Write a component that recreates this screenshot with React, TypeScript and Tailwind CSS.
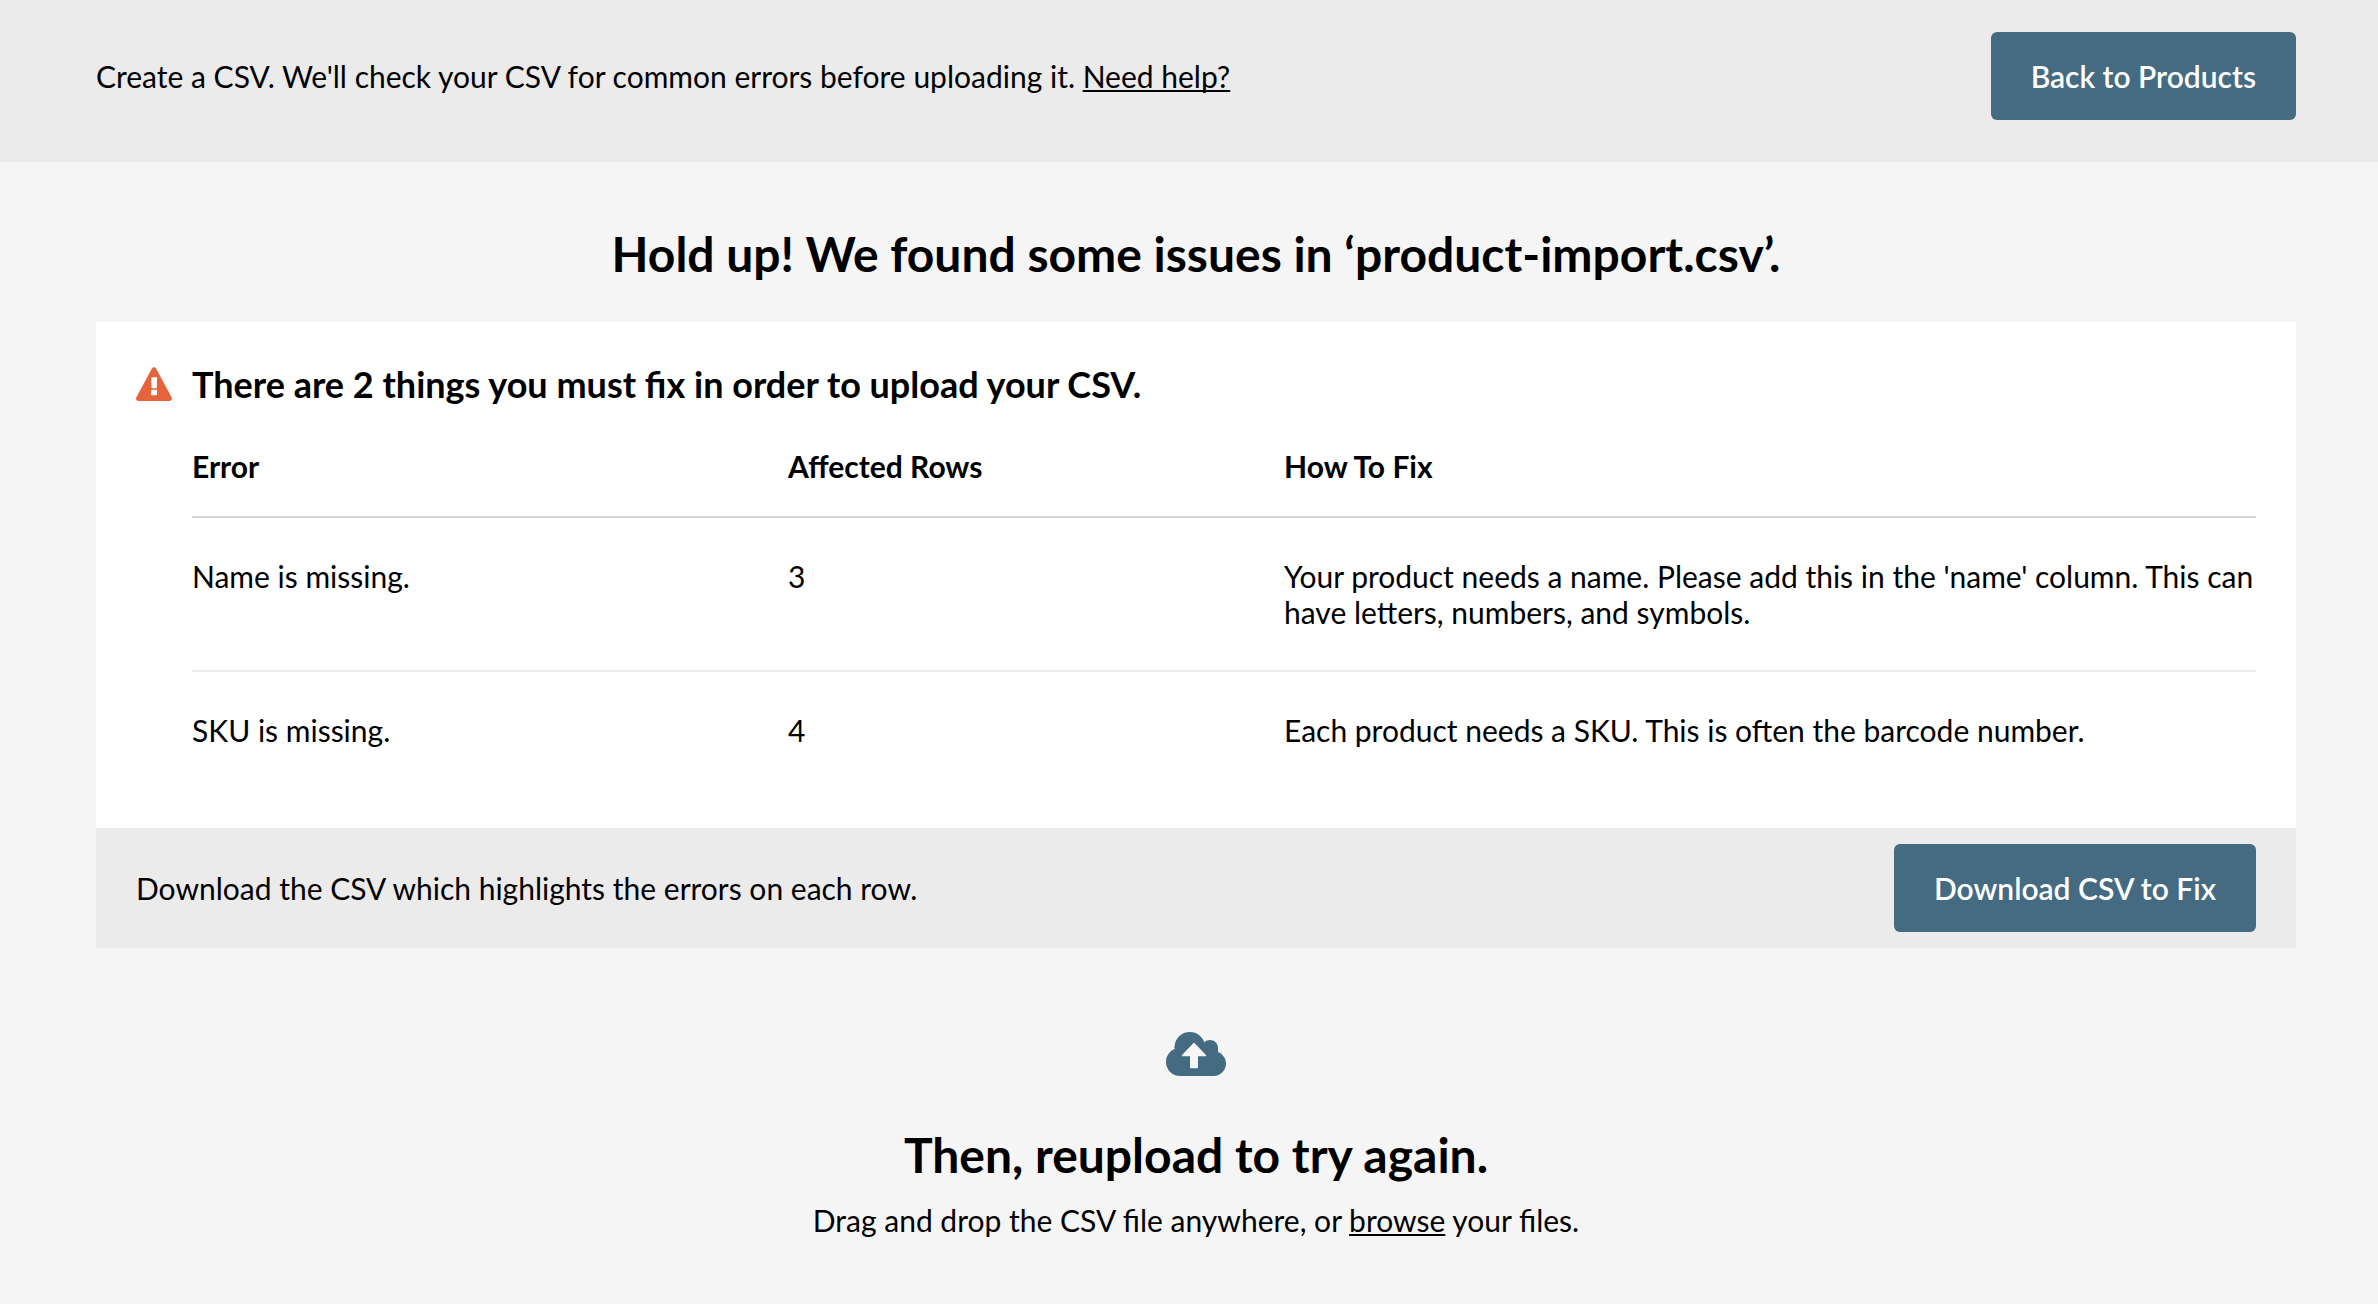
const issues = [
  {
    error: "Name is missing.",
    rows: 3,
    fix: "Your product needs a name. Please add this in the 'name' column. This can have letters, numbers, and symbols.",
  },
  { error: "SKU is missing.", rows: 4, fix: "Each product needs a SKU. This is often the barcode number." },
];

const button = "h-[88px] shrink-0 rounded-md bg-[#456b82] px-10 text-[30px] font-semibold text-white";
const link = "underline decoration-2 underline-offset-2 [text-decoration-skip-ink:none]";

function WarningIcon() {
  return (
    <svg viewBox="0 0 36 34" className="h-[34px] w-9 shrink-0" aria-hidden="true">
      <path
        fill="#e5643c"
        d="M15.9 1.4C16.8-.3 19.2-.3 20.1 1.4L35.6 30.3C36.5 32 35.5 34 33.5 34H2.5C.5 34-.5 32 .4 30.3Z"
      />
      <path fill="#fff" d="M15.6 10.3h5.1q.4 0 .4.5l-.3 10q0 .4-.4.4h-4.5q-.4 0-.4-.4l-.3-10q0-.5.4-.5ZM15.6 22.8h5q.4 0 .4.4v4.6q0 .4-.4.4h-5q-.4 0-.4-.4v-4.6q0-.4.4-.4Z" />
    </svg>
  );
}

function CloudUploadIcon() {
  return (
    <svg viewBox="0 0 60 44" className="h-11 w-[60px]" aria-hidden="true">
      <g fill="#456b82">
        <circle cx="23.8" cy="15.3" r="15.3" />
        <circle cx="44" cy="16" r="8" />
        <circle cx="14" cy="30" r="14" />
        <circle cx="47.7" cy="31.6" r="12.3" />
        <path d="M14 15H52V32L47.7 44H14Z" />
      </g>
      <path fill="#f5f5f5" d="M28 10.6 40.2 23.2Q40.4 24.3 39.5 24.3H32V35.6Q32 36.2 31.4 36.2H24.6Q24 36.2 24 35.6V24.3H16.5Q15.6 24.3 15.8 23.2Z" />
    </svg>
  );
}

export default function App() {
  return (
    <div className="min-h-screen bg-[#f5f5f5] font-['Lato',sans-serif] text-[30px] leading-9 text-black">
      <header className="flex items-start justify-between bg-[#ebebeb] pt-8 pr-[82px] pb-[42px] pl-24">
        <p className="pt-[26px]">
          Create a CSV. We'll check your CSV for common errors before uploading it.{" "}
          <a href="#help" className={link}>Need help?</a>
        </p>
        <button type="button" className={button}>Back to Products</button>
      </header>
      <main className="pr-[82px] pl-24">
        <h1 className="pt-[61px] pb-[37px] text-center text-[48px] leading-[62px] font-bold">
          Hold up! We found some issues in ‘product-import.csv’.
        </h1>
        <section>
          <div className="bg-white px-10 pt-[38px] pb-10">
            <div className="flex h-12 items-center gap-5">
              <WarningIcon />
              <h2 className="text-[36px] font-bold">There are 2 things you must fix in order to upload your CSV.</h2>
            </div>
            <div className="pl-14">
              <table className="w-full table-fixed text-left align-top">
                <colgroup>
                  <col className="w-[596px]" />
                  <col className="w-[496px]" />
                  <col />
                </colgroup>
                <thead>
                  <tr className="border-b-2 border-[#d6d6d6]">
                    <th scope="col" className="pt-10 pb-8 font-bold">Error</th>
                    <th scope="col" className="pt-10 pb-8 font-bold">Affected Rows</th>
                    <th scope="col" className="pt-10 pb-8 font-bold">How To Fix</th>
                  </tr>
                </thead>
                <tbody>
                  {issues.map((issue) => (
                    <tr key={issue.error} className="border-b-2 border-[#ebebeb] align-top last:border-b-0">
                      <td className="py-10">{issue.error}</td>
                      <td className="py-10">{issue.rows}</td>
                      <td className="py-10">{issue.fix}</td>
                    </tr>
                  ))}
                </tbody>
              </table>
            </div>
          </div>
          <div className="flex items-center justify-between bg-[#ebebeb] px-10 py-4">
            <p>Download the CSV which highlights the errors on each row.</p>
            <button type="button" className={button}>Download CSV to Fix</button>
          </div>
        </section>
        <section className="flex flex-col items-center pt-[84px] text-center">
          <CloudUploadIcon />
          <h2 className="pt-12 text-[48px] leading-[62px] font-bold">Then, reupload to try again.</h2>
          <p className="pt-4">
            Drag and drop the CSV file anywhere, or <button type="button" className={link}>browse</button> your files.
          </p>
        </section>
      </main>
    </div>
  );
}
